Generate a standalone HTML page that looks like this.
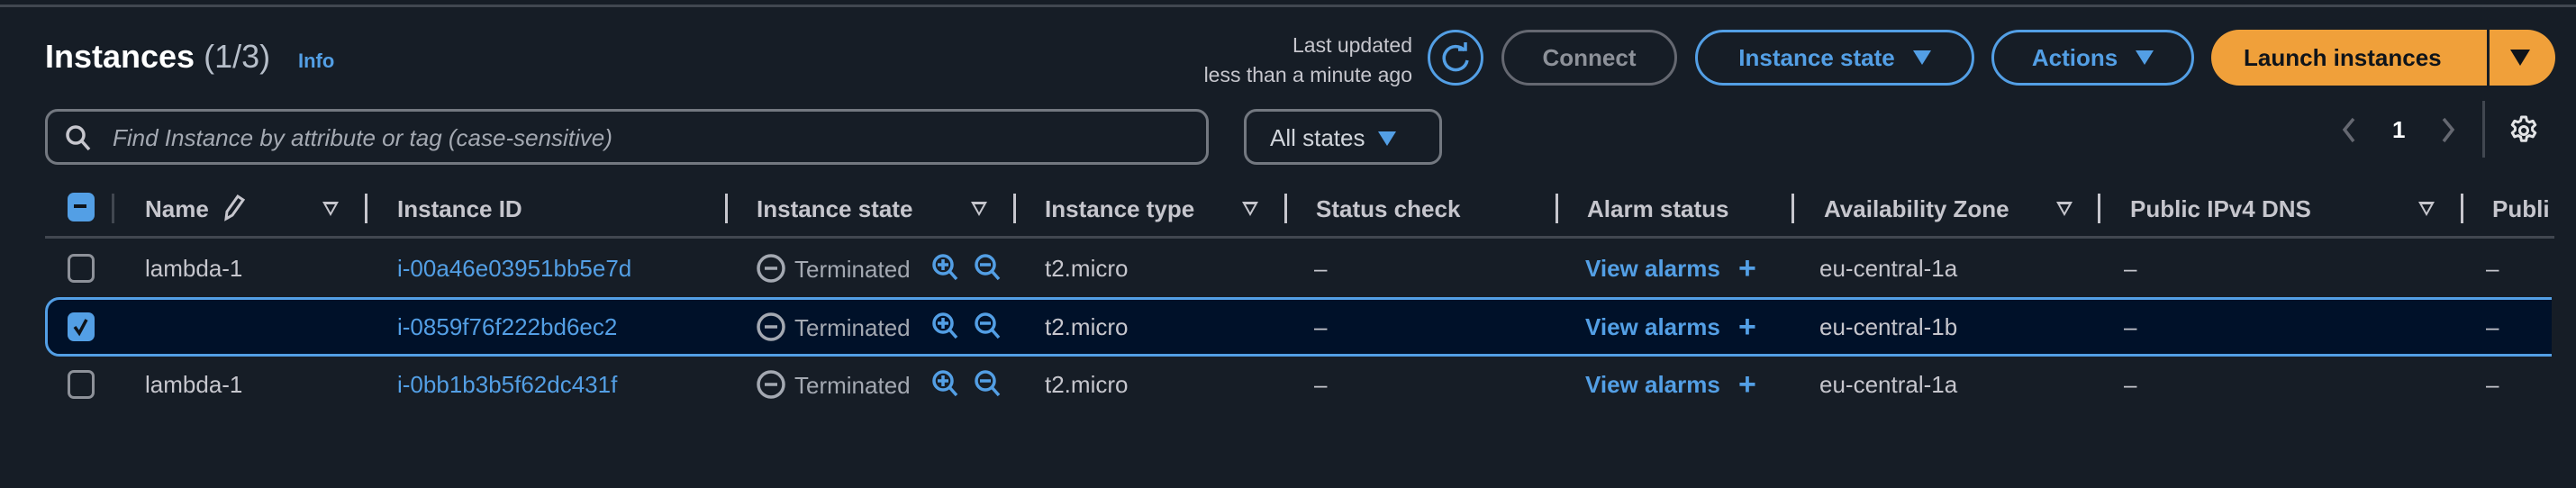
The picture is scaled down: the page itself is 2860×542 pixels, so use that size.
<!DOCTYPE html>
<html><head><meta charset="utf-8"><style>
*{margin:0;padding:0;box-sizing:border-box}
body{width:2860px;height:542px;background:#161d26;font-family:"Liberation Sans",sans-serif;color:#d1d5db;position:relative;overflow:hidden}
.a{position:absolute;white-space:nowrap}
.hd{font-weight:bold;font-size:26px;color:#c6c6cd;top:217px}
.sep{position:absolute;width:3px;height:33px;top:215px;background:#c6c6cd}
.tri{position:absolute;top:224px;width:0;height:0;border-left:9px solid transparent;border-right:9px solid transparent;border-top:16px solid #c6c6cd}
.tri:after{content:"";position:absolute;left:-5px;top:-13px;border-left:5px solid transparent;border-right:5px solid transparent;border-top:9px solid #161d26}
.btn{position:absolute;top:33px;height:62px;border:3px solid #539fe5;border-radius:31px;font-weight:bold;font-size:26px;color:#539fe5;display:flex;align-items:center;justify-content:center}
.bt{display:inline-block;width:0;height:0;border-left:10px solid transparent;border-right:10px solid transparent;border-top:16px solid currentColor;margin-left:20px}
.cell{position:absolute;font-size:26px;color:#c6c6cd;line-height:30px}
.id{color:#539fe5}
.blue{color:#539fe5;font-weight:bold}
.pl{position:absolute;left:170px;top:0;font-size:34px;font-weight:bold;line-height:30px}
.cb{position:absolute;left:75px;width:30px;height:32px;border:3px solid #8d9199;border-radius:7px}
</style></head><body>
<div class="a" style="left:0;top:5px;width:2860px;height:3px;background:#414750"></div>
<div class="a" style="left:50px;top:42px;font-size:36px;font-weight:bold;color:#fff">Instances <span style="font-weight:normal;color:#b6bec9">(1/3)</span></div>
<div class="a" style="left:331px;top:55px;font-size:22px;font-weight:bold;color:#539fe5">Info</div>

<div class="a" style="right:1292px;top:34px;font-size:23px;color:#c6c6cd;text-align:right;line-height:33px">Last updated<br>less than a minute ago</div>
<div class="a" style="left:1585px;top:33px;width:62px;height:62px;border:3px solid #539fe5;border-radius:50%"><svg width="56" height="56" viewBox="0 0 56 56" style="position:absolute;left:0;top:0"><path d="M38 20 A13 13 0 1 0 41 31" fill="none" stroke="#539fe5" stroke-width="3.5"/><path d="M31 19 L39 19 L39 11" fill="none" stroke="#539fe5" stroke-width="3.5"/></svg></div>
<div class="btn" style="left:1667px;width:195px;border-color:#656871;color:#8d9199">Connect</div>
<div class="btn" style="left:1882px;width:310px">Instance state<span class="bt"></span></div>
<div class="btn" style="left:2211px;width:225px">Actions<span class="bt"></span></div>
<div class="btn" style="left:2455px;width:382px;border:none;background:#f0a03a;color:#0f141a;justify-content:flex-start;padding-left:36px">Launch instances</div>
<div class="a" style="left:2761px;top:33px;width:3px;height:62px;background:#161d26"></div>
<div class="a" style="left:2787px;top:55px;border-left:11px solid transparent;border-right:11px solid transparent;border-top:18px solid #0f141a"></div>

<div class="a" style="left:50px;top:121px;width:1292px;height:62px;border:3px solid #737880;border-radius:14px"></div>
<svg class="a" style="left:70px;top:136px" width="34" height="34" viewBox="0 0 34 34"><circle cx="14" cy="14" r="9" fill="none" stroke="#c6c6cd" stroke-width="3.5"/><path d="M21 21 L29 30" stroke="#c6c6cd" stroke-width="3.5"/></svg>
<div class="a" style="left:125px;top:138px;font-size:26px;font-style:italic;color:#a4a9b2">Find Instance by attribute or tag (case-sensitive)</div>
<div class="a" style="left:1381px;top:121px;width:220px;height:62px;border:3px solid #737880;border-radius:14px;font-size:26px;color:#d1d5db;padding:14px 0 0 26px">All states<span class="bt" style="color:#539fe5;margin-left:14px"></span></div>

<svg class="a" style="left:2595px;top:128px" width="140" height="34"><path d="M18 4 L8 16 L18 29" fill="none" stroke="#656871" stroke-width="3.5"/><path d="M118 4 L128 16 L118 29" fill="none" stroke="#656871" stroke-width="3.5"/></svg>
<div class="a" style="left:2656px;top:129px;font-size:26px;font-weight:bold;color:#fff">1</div>
<div class="a" style="left:2756px;top:112px;width:3px;height:63px;background:#414750"></div>
<svg class="a" style="left:2784px;top:127px" width="36" height="36" viewBox="0 0 24 24"><path d="M10.3 2h3.4l.6 2.8 1.8 1 2.7-.9 1.7 2.9-2.1 1.9v2.1l2.1 1.9-1.7 2.9-2.7-.9-1.8 1-.6 2.8h-3.4l-.6-2.8-1.8-1-2.7.9-1.7-2.9 2.1-1.9V9.7L3.5 7.8l1.7-2.9 2.7.9 1.8-1z" fill="none" stroke="#e3e4e6" stroke-width="2" stroke-linejoin="round"/><circle cx="12" cy="12" r="3" fill="none" stroke="#e3e4e6" stroke-width="2"/></svg>

<div class="a" style="left:75px;top:214px;width:30px;height:32px;background:#539fe5;border-radius:7px"><div style="position:absolute;left:7px;top:13px;width:14px;height:4px;background:#0f141a"></div></div>
<div class="sep" style="left:124px;background:#414750"></div>
<div class="a hd" style="left:161px">Name</div>
<svg class="a" style="left:244px;top:213px" width="30" height="36" viewBox="0 0 30 36"><path d="M7 30 L8 22 L20 5 L26 9 L14 26 Z" fill="none" stroke="#c6c6cd" stroke-width="3"/></svg>
<div class="tri" style="left:358px"></div>
<div class="sep" style="left:405px"></div>
<div class="a hd" style="left:441px">Instance ID</div>
<div class="sep" style="left:805px"></div>
<div class="a hd" style="left:840px">Instance state</div>
<div class="tri" style="left:1078px"></div>
<div class="sep" style="left:1125px"></div>
<div class="a hd" style="left:1160px">Instance type</div>
<div class="tri" style="left:1379px"></div>
<div class="sep" style="left:1426px"></div>
<div class="a hd" style="left:1461px">Status check</div>
<div class="sep" style="left:1727px"></div>
<div class="a hd" style="left:1762px">Alarm status</div>
<div class="sep" style="left:1989px"></div>
<div class="a hd" style="left:2025px">Availability Zone</div>
<div class="tri" style="left:2283px"></div>
<div class="sep" style="left:2329px"></div>
<div class="a hd" style="left:2365px">Public IPv4 DNS</div>
<div class="tri" style="left:2685px"></div>
<div class="sep" style="left:2732px"></div>
<div class="a hd" style="left:2767px">Publi</div>
<div class="a" style="left:50px;top:262px;width:2786px;height:3px;background:#414750"></div>

<div class="a" style="left:50px;top:330px;width:2783px;height:66px;overflow:hidden"><div style="position:absolute;left:0;top:0;width:2900px;height:66px;background:#001129;border:3px solid #539fe5;border-radius:16px"></div></div>

<div class="cb" style="top:282px"></div>
<div class="a" style="left:75px;top:347px;width:30px;height:32px;background:#539fe5;border-radius:7px"><svg width="30" height="32" viewBox="0 0 30 32"><path d="M8 16 L13 23 L21 8" fill="none" stroke="#0f141a" stroke-width="3.5"/></svg></div>
<div class="cb" style="top:411px"></div>

<div class="cell" style="left:161px;top:283px">lambda-1</div>
<div class="cell" style="left:161px;top:412px">lambda-1</div>
<div class="cell id" style="left:441px;top:283px">i-00a46e03951bb5e7d</div>
<div class="cell id" style="left:441px;top:348px">i-0859f76f222bd6ec2</div>
<div class="cell id" style="left:441px;top:412px">i-0bb1b3b5f62dc431f</div>

<svg class="a" style="left:838px;top:281px" width="290" height="34"><circle cx="18" cy="17" r="14" fill="none" stroke="#a4a9b2" stroke-width="3.5"/><path d="M11 17 H25" stroke="#a4a9b2" stroke-width="3.5"/><text x="44" y="27" font-family="Liberation Sans" font-size="26" fill="#a4a9b2">Terminated</text><circle cx="209" cy="13" r="10" fill="none" stroke="#539fe5" stroke-width="3.5"/><path d="M203 13 H215 M209 7 V19 M216 20 L224 29" stroke="#539fe5" stroke-width="3.5"/><circle cx="256" cy="13" r="10" fill="none" stroke="#539fe5" stroke-width="3.5"/><path d="M250 13 H262 M263 20 L271 29" stroke="#539fe5" stroke-width="3.5"/></svg>
<svg class="a" style="left:838px;top:346px" width="290" height="34"><circle cx="18" cy="17" r="14" fill="none" stroke="#a4a9b2" stroke-width="3.5"/><path d="M11 17 H25" stroke="#a4a9b2" stroke-width="3.5"/><text x="44" y="27" font-family="Liberation Sans" font-size="26" fill="#a4a9b2">Terminated</text><circle cx="209" cy="13" r="10" fill="none" stroke="#539fe5" stroke-width="3.5"/><path d="M203 13 H215 M209 7 V19 M216 20 L224 29" stroke="#539fe5" stroke-width="3.5"/><circle cx="256" cy="13" r="10" fill="none" stroke="#539fe5" stroke-width="3.5"/><path d="M250 13 H262 M263 20 L271 29" stroke="#539fe5" stroke-width="3.5"/></svg>
<svg class="a" style="left:838px;top:410px" width="290" height="34"><circle cx="18" cy="17" r="14" fill="none" stroke="#a4a9b2" stroke-width="3.5"/><path d="M11 17 H25" stroke="#a4a9b2" stroke-width="3.5"/><text x="44" y="27" font-family="Liberation Sans" font-size="26" fill="#a4a9b2">Terminated</text><circle cx="209" cy="13" r="10" fill="none" stroke="#539fe5" stroke-width="3.5"/><path d="M203 13 H215 M209 7 V19 M216 20 L224 29" stroke="#539fe5" stroke-width="3.5"/><circle cx="256" cy="13" r="10" fill="none" stroke="#539fe5" stroke-width="3.5"/><path d="M250 13 H262 M263 20 L271 29" stroke="#539fe5" stroke-width="3.5"/></svg>

<div class="cell" style="left:1160px;top:283px">t2.micro</div>
<div class="cell" style="left:1160px;top:348px">t2.micro</div>
<div class="cell" style="left:1160px;top:412px">t2.micro</div>

<div class="cell" style="left:1459px;top:283px">–</div>
<div class="cell" style="left:1459px;top:348px">–</div>
<div class="cell" style="left:1459px;top:412px">–</div>

<div class="cell blue" style="left:1760px;top:283px">View alarms<span class="pl">+</span></div>
<div class="cell blue" style="left:1760px;top:348px">View alarms<span class="pl">+</span></div>
<div class="cell blue" style="left:1760px;top:412px">View alarms<span class="pl">+</span></div>

<div class="cell" style="left:2020px;top:283px">eu-central-1a</div>
<div class="cell" style="left:2020px;top:348px">eu-central-1b</div>
<div class="cell" style="left:2020px;top:412px">eu-central-1a</div>

<div class="cell" style="left:2358px;top:283px">–</div>
<div class="cell" style="left:2358px;top:348px">–</div>
<div class="cell" style="left:2358px;top:412px">–</div>
<div class="cell" style="left:2760px;top:283px">–</div>
<div class="cell" style="left:2760px;top:348px">–</div>
<div class="cell" style="left:2760px;top:412px">–</div>
</body></html>
